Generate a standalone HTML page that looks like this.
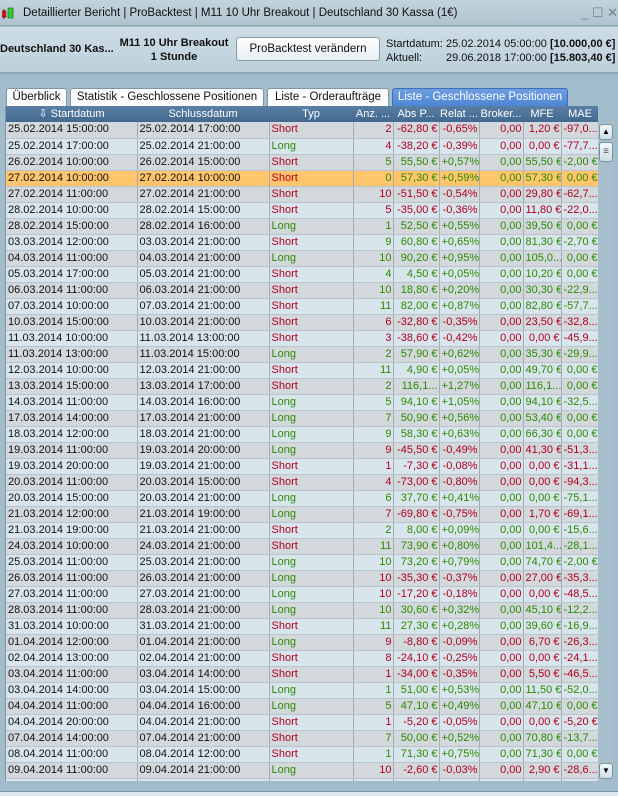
<!DOCTYPE html><html><head><meta charset="utf-8"><style>
*{margin:0;padding:0;box-sizing:border-box}
body{width:618px;height:796px;overflow:hidden;background:#a3bccb;font-family:"Liberation Sans",Arial,sans-serif;position:relative}
#tb{position:absolute;left:0;top:0;width:618px;height:26px;background:linear-gradient(#c3d3dc,#afc4cf);font-size:11.5px;color:#111;line-height:26px;padding-left:23px;border-bottom:1px solid #8fa6b3;white-space:nowrap}
#ico{position:absolute;left:2px;top:7px;width:12px;height:13px}
#wc{position:absolute;right:0;top:0;color:#6d8593;font-size:13px}
#hp{position:absolute;left:0;top:27px;width:618px;height:47px;background:linear-gradient(#cddde6,#bdd0da);border-bottom:2px solid #8ea6b3;font-size:11.5px;color:#111;white-space:nowrap}
.b{font-weight:bold}
#btn{position:absolute;left:236px;top:10px;width:144px;height:24px;border:1px solid #8a9aa4;border-radius:3px;background:linear-gradient(#fff,#e8eef1);text-align:center;line-height:22px;font-size:11.5px}
#tabs{position:absolute;top:88px;left:6px;height:18px;font-size:11.5px;white-space:nowrap}
.tab{position:absolute;top:0;height:18px;border:1px solid #7f95a2;border-bottom:none;background:#fbfcfd;border-radius:3px 3px 0 0;text-align:center;line-height:17px;color:#111}
#grid{position:absolute;left:5px;top:106px;width:593px;height:675px;background:#d6e2ea;overflow:hidden;border-left:1px solid #8096a4}
table{border-collapse:collapse;table-layout:fixed;width:593px;font-size:11px}
th{background:linear-gradient(#5a7fa4,#42688f);color:#fff;font-weight:normal;height:16px;line-height:15px;text-align:center;white-space:nowrap;overflow:hidden;font-size:11px;padding:0}
td{height:16px;border-right:1px solid #a3adb5;border-bottom:1px solid #b8c3ca;white-space:nowrap;overflow:hidden;padding:0 1px 0 2px;line-height:15px}
tr:nth-child(odd) td{background:#d9e5ed}
tr:nth-child(even) td{background:#d3d8dd}
tr.hl td{background:#ffc56c}
td.n{text-align:right}
.r td{color:#b0001c}.g td{color:#2c8a00}
.r td.d,.g td.d{color:#111}
td.S{color:#b0001c!important}td.L{color:#2c8a00!important}
#sb{position:absolute;left:598px;top:122px;width:16px;height:659px;background:#a7bfcd}
.sbb{position:absolute;left:1px;width:14px;height:16px;border:1px solid #7a93a1;border-radius:3px;background:linear-gradient(#f4f8fa,#cfdde5);font-size:8px;text-align:center;line-height:14px}
#bot{position:absolute;left:0;top:791px;width:618px;height:5px;background:#dfe8ee;border-top:1px solid #7f97a4}
</style></head><body>
<div id="tb"><svg id="ico" viewBox="0 0 12 13"><rect x="0" y="4" width="4" height="6" fill="#e33" stroke="#700" stroke-width=".6"/><line x1="2" y1="2" x2="2" y2="12" stroke="#700"/><rect x="6" y="1" width="5" height="10" fill="#3c3" stroke="#060" stroke-width=".6"/></svg>Detaillierter Bericht | ProBacktest | M11 10 Uhr Breakout | Deutschland 30 Kassa (1€)<span id="wc">_ ☐ ✕</span></div>
<div id="hp">
<div class="b" style="position:absolute;left:0;top:16px;font-size:11px">Deutschland 30 Kas...</div>
<div class="b" style="position:absolute;left:114px;top:9px;width:120px;text-align:center;line-height:14px;font-size:11px">M11 10 Uhr Breakout<br>1 Stunde</div>
<div id="btn">ProBacktest verändern</div>
<div style="position:absolute;left:386px;top:10px;line-height:14px;font-size:11px">Startdatum:<br>Aktuell:</div>
<div style="position:absolute;left:446px;top:10px;line-height:14px;font-size:11px">25.02.2014 05:00:00 <b>[10.000,00 €]</b><br>29.06.2018 17:00:00 <b>[15.803,40 €]</b></div>
</div>
<div id="tabs">
<div class="tab" style="left:0;width:61px">Überblick</div>
<div class="tab" style="left:64px;width:194px">Statistik - Geschlossene Positionen</div>
<div class="tab" style="left:261px;width:122px">Liste - Orderaufträge</div>
<div class="tab" style="left:386px;width:176px;background:linear-gradient(#6f9ee0,#4d86d6);color:#fff;border-color:#3c6fb8">Liste - Geschlossene Positionen</div>
</div>
<div id="grid"><table>
<colgroup><col style="width:131px"><col style="width:132px"><col style="width:84px"><col style="width:40px"><col style="width:46px"><col style="width:40px"><col style="width:44px"><col style="width:38px"><col style="width:38px"></colgroup>
<tr><th>⇩ Startdatum</th><th>Schlussdatum</th><th>Typ</th><th>Anz. ...</th><th>Abs P...</th><th>Relat ...</th><th>Broker...</th><th>MFE</th><th>MAE</th></tr>
<tr class="r"><td class="d">25.02.2014 15:00:00</td><td class="d">25.02.2014 17:00:00</td><td class="S">Short</td><td class="n">2</td><td class="n">-62,80 €</td><td class="n">-0,65%</td><td class="n">0,00</td><td class="n">1,20 €</td><td>-97,0...</td></tr>
<tr class="r"><td class="d">25.02.2014 17:00:00</td><td class="d">25.02.2014 21:00:00</td><td class="L">Long</td><td class="n">4</td><td class="n">-38,20 €</td><td class="n">-0,39%</td><td class="n">0,00</td><td class="n">0,00 €</td><td>-77,7...</td></tr>
<tr class="g"><td class="d">26.02.2014 10:00:00</td><td class="d">26.02.2014 15:00:00</td><td class="S">Short</td><td class="n">5</td><td class="n">55,50 €</td><td class="n">+0,57%</td><td class="n">0,00</td><td class="n">55,50 €</td><td>-2,00 €</td></tr>
<tr class="g hl"><td class="d">27.02.2014 10:00:00</td><td class="d">27.02.2014 10:00:00</td><td class="S">Short</td><td class="n">0</td><td class="n">57,30 €</td><td class="n">+0,59%</td><td class="n">0,00</td><td class="n">57,30 €</td><td class="n">0,00 €</td></tr>
<tr class="r"><td class="d">27.02.2014 11:00:00</td><td class="d">27.02.2014 21:00:00</td><td class="S">Short</td><td class="n">10</td><td class="n">-51,50 €</td><td class="n">-0,54%</td><td class="n">0,00</td><td class="n">29,80 €</td><td>-62,7...</td></tr>
<tr class="r"><td class="d">28.02.2014 10:00:00</td><td class="d">28.02.2014 15:00:00</td><td class="S">Short</td><td class="n">5</td><td class="n">-35,00 €</td><td class="n">-0,36%</td><td class="n">0,00</td><td class="n">11,80 €</td><td>-22,0...</td></tr>
<tr class="g"><td class="d">28.02.2014 15:00:00</td><td class="d">28.02.2014 16:00:00</td><td class="L">Long</td><td class="n">1</td><td class="n">52,50 €</td><td class="n">+0,55%</td><td class="n">0,00</td><td class="n">39,50 €</td><td class="n">0,00 €</td></tr>
<tr class="g"><td class="d">03.03.2014 12:00:00</td><td class="d">03.03.2014 21:00:00</td><td class="S">Short</td><td class="n">9</td><td class="n">60,80 €</td><td class="n">+0,65%</td><td class="n">0,00</td><td class="n">81,30 €</td><td>-2,70 €</td></tr>
<tr class="g"><td class="d">04.03.2014 11:00:00</td><td class="d">04.03.2014 21:00:00</td><td class="L">Long</td><td class="n">10</td><td class="n">90,20 €</td><td class="n">+0,95%</td><td class="n">0,00</td><td>105,0...</td><td class="n">0,00 €</td></tr>
<tr class="g"><td class="d">05.03.2014 17:00:00</td><td class="d">05.03.2014 21:00:00</td><td class="S">Short</td><td class="n">4</td><td class="n">4,50 €</td><td class="n">+0,05%</td><td class="n">0,00</td><td class="n">10,20 €</td><td class="n">0,00 €</td></tr>
<tr class="g"><td class="d">06.03.2014 11:00:00</td><td class="d">06.03.2014 21:00:00</td><td class="S">Short</td><td class="n">10</td><td class="n">18,80 €</td><td class="n">+0,20%</td><td class="n">0,00</td><td class="n">30,30 €</td><td>-22,9...</td></tr>
<tr class="g"><td class="d">07.03.2014 10:00:00</td><td class="d">07.03.2014 21:00:00</td><td class="S">Short</td><td class="n">11</td><td class="n">82,00 €</td><td class="n">+0,87%</td><td class="n">0,00</td><td class="n">82,80 €</td><td>-57,7...</td></tr>
<tr class="r"><td class="d">10.03.2014 15:00:00</td><td class="d">10.03.2014 21:00:00</td><td class="S">Short</td><td class="n">6</td><td class="n">-32,80 €</td><td class="n">-0,35%</td><td class="n">0,00</td><td class="n">23,50 €</td><td>-32,8...</td></tr>
<tr class="r"><td class="d">11.03.2014 10:00:00</td><td class="d">11.03.2014 13:00:00</td><td class="S">Short</td><td class="n">3</td><td class="n">-38,60 €</td><td class="n">-0,42%</td><td class="n">0,00</td><td class="n">0,00 €</td><td>-45,9...</td></tr>
<tr class="g"><td class="d">11.03.2014 13:00:00</td><td class="d">11.03.2014 15:00:00</td><td class="L">Long</td><td class="n">2</td><td class="n">57,90 €</td><td class="n">+0,62%</td><td class="n">0,00</td><td class="n">35,30 €</td><td>-29,9...</td></tr>
<tr class="g"><td class="d">12.03.2014 10:00:00</td><td class="d">12.03.2014 21:00:00</td><td class="S">Short</td><td class="n">11</td><td class="n">4,90 €</td><td class="n">+0,05%</td><td class="n">0,00</td><td class="n">49,70 €</td><td class="n">0,00 €</td></tr>
<tr class="g"><td class="d">13.03.2014 15:00:00</td><td class="d">13.03.2014 17:00:00</td><td class="S">Short</td><td class="n">2</td><td class="n">116,1...</td><td class="n">+1,27%</td><td class="n">0,00</td><td>116,1...</td><td class="n">0,00 €</td></tr>
<tr class="g"><td class="d">14.03.2014 11:00:00</td><td class="d">14.03.2014 16:00:00</td><td class="L">Long</td><td class="n">5</td><td class="n">94,10 €</td><td class="n">+1,05%</td><td class="n">0,00</td><td class="n">94,10 €</td><td>-32,5...</td></tr>
<tr class="g"><td class="d">17.03.2014 14:00:00</td><td class="d">17.03.2014 21:00:00</td><td class="L">Long</td><td class="n">7</td><td class="n">50,90 €</td><td class="n">+0,56%</td><td class="n">0,00</td><td class="n">53,40 €</td><td class="n">0,00 €</td></tr>
<tr class="g"><td class="d">18.03.2014 12:00:00</td><td class="d">18.03.2014 21:00:00</td><td class="L">Long</td><td class="n">9</td><td class="n">58,30 €</td><td class="n">+0,63%</td><td class="n">0,00</td><td class="n">66,30 €</td><td class="n">0,00 €</td></tr>
<tr class="r"><td class="d">19.03.2014 11:00:00</td><td class="d">19.03.2014 20:00:00</td><td class="L">Long</td><td class="n">9</td><td class="n">-45,50 €</td><td class="n">-0,49%</td><td class="n">0,00</td><td class="n">41,30 €</td><td>-51,3...</td></tr>
<tr class="r"><td class="d">19.03.2014 20:00:00</td><td class="d">19.03.2014 21:00:00</td><td class="S">Short</td><td class="n">1</td><td class="n">-7,30 €</td><td class="n">-0,08%</td><td class="n">0,00</td><td class="n">0,00 €</td><td>-31,1...</td></tr>
<tr class="r"><td class="d">20.03.2014 11:00:00</td><td class="d">20.03.2014 15:00:00</td><td class="S">Short</td><td class="n">4</td><td class="n">-73,00 €</td><td class="n">-0,80%</td><td class="n">0,00</td><td class="n">0,00 €</td><td>-94,3...</td></tr>
<tr class="g"><td class="d">20.03.2014 15:00:00</td><td class="d">20.03.2014 21:00:00</td><td class="L">Long</td><td class="n">6</td><td class="n">37,70 €</td><td class="n">+0,41%</td><td class="n">0,00</td><td class="n">0,00 €</td><td>-75,1...</td></tr>
<tr class="r"><td class="d">21.03.2014 12:00:00</td><td class="d">21.03.2014 19:00:00</td><td class="L">Long</td><td class="n">7</td><td class="n">-69,80 €</td><td class="n">-0,75%</td><td class="n">0,00</td><td class="n">1,70 €</td><td>-69,1...</td></tr>
<tr class="g"><td class="d">21.03.2014 19:00:00</td><td class="d">21.03.2014 21:00:00</td><td class="S">Short</td><td class="n">2</td><td class="n">8,00 €</td><td class="n">+0,09%</td><td class="n">0,00</td><td class="n">0,00 €</td><td>-15,6...</td></tr>
<tr class="g"><td class="d">24.03.2014 10:00:00</td><td class="d">24.03.2014 21:00:00</td><td class="S">Short</td><td class="n">11</td><td class="n">73,90 €</td><td class="n">+0,80%</td><td class="n">0,00</td><td>101,4...</td><td>-28,1...</td></tr>
<tr class="g"><td class="d">25.03.2014 11:00:00</td><td class="d">25.03.2014 21:00:00</td><td class="L">Long</td><td class="n">10</td><td class="n">73,20 €</td><td class="n">+0,79%</td><td class="n">0,00</td><td class="n">74,70 €</td><td>-2,00 €</td></tr>
<tr class="r"><td class="d">26.03.2014 11:00:00</td><td class="d">26.03.2014 21:00:00</td><td class="L">Long</td><td class="n">10</td><td class="n">-35,30 €</td><td class="n">-0,37%</td><td class="n">0,00</td><td class="n">27,00 €</td><td>-35,3...</td></tr>
<tr class="r"><td class="d">27.03.2014 11:00:00</td><td class="d">27.03.2014 21:00:00</td><td class="L">Long</td><td class="n">10</td><td class="n">-17,20 €</td><td class="n">-0,18%</td><td class="n">0,00</td><td class="n">0,00 €</td><td>-48,5...</td></tr>
<tr class="g"><td class="d">28.03.2014 11:00:00</td><td class="d">28.03.2014 21:00:00</td><td class="L">Long</td><td class="n">10</td><td class="n">30,60 €</td><td class="n">+0,32%</td><td class="n">0,00</td><td class="n">45,10 €</td><td>-12,2...</td></tr>
<tr class="g"><td class="d">31.03.2014 10:00:00</td><td class="d">31.03.2014 21:00:00</td><td class="S">Short</td><td class="n">11</td><td class="n">27,30 €</td><td class="n">+0,28%</td><td class="n">0,00</td><td class="n">39,60 €</td><td>-16,9...</td></tr>
<tr class="r"><td class="d">01.04.2014 12:00:00</td><td class="d">01.04.2014 21:00:00</td><td class="L">Long</td><td class="n">9</td><td class="n">-8,80 €</td><td class="n">-0,09%</td><td class="n">0,00</td><td class="n">6,70 €</td><td>-26,3...</td></tr>
<tr class="r"><td class="d">02.04.2014 13:00:00</td><td class="d">02.04.2014 21:00:00</td><td class="S">Short</td><td class="n">8</td><td class="n">-24,10 €</td><td class="n">-0,25%</td><td class="n">0,00</td><td class="n">0,00 €</td><td>-24,1...</td></tr>
<tr class="r"><td class="d">03.04.2014 11:00:00</td><td class="d">03.04.2014 14:00:00</td><td class="S">Short</td><td class="n">1</td><td class="n">-34,00 €</td><td class="n">-0,35%</td><td class="n">0,00</td><td class="n">5,50 €</td><td>-46,5...</td></tr>
<tr class="g"><td class="d">03.04.2014 14:00:00</td><td class="d">03.04.2014 15:00:00</td><td class="L">Long</td><td class="n">1</td><td class="n">51,00 €</td><td class="n">+0,53%</td><td class="n">0,00</td><td class="n">11,50 €</td><td>-52,0...</td></tr>
<tr class="g"><td class="d">04.04.2014 11:00:00</td><td class="d">04.04.2014 16:00:00</td><td class="L">Long</td><td class="n">5</td><td class="n">47,10 €</td><td class="n">+0,49%</td><td class="n">0,00</td><td class="n">47,10 €</td><td class="n">0,00 €</td></tr>
<tr class="r"><td class="d">04.04.2014 20:00:00</td><td class="d">04.04.2014 21:00:00</td><td class="S">Short</td><td class="n">1</td><td class="n">-5,20 €</td><td class="n">-0,05%</td><td class="n">0,00</td><td class="n">0,00 €</td><td>-5,20 €</td></tr>
<tr class="g"><td class="d">07.04.2014 14:00:00</td><td class="d">07.04.2014 21:00:00</td><td class="S">Short</td><td class="n">7</td><td class="n">50,00 €</td><td class="n">+0,52%</td><td class="n">0,00</td><td class="n">70,80 €</td><td>-13,7...</td></tr>
<tr class="g"><td class="d">08.04.2014 11:00:00</td><td class="d">08.04.2014 12:00:00</td><td class="S">Short</td><td class="n">1</td><td class="n">71,30 €</td><td class="n">+0,75%</td><td class="n">0,00</td><td class="n">71,30 €</td><td class="n">0,00 €</td></tr>
<tr class="r"><td class="d">09.04.2014 11:00:00</td><td class="d">09.04.2014 21:00:00</td><td class="L">Long</td><td class="n">10</td><td class="n">-2,60 €</td><td class="n">-0,03%</td><td class="n">0,00</td><td class="n">2,90 €</td><td>-28,6...</td></tr>
<tr><td></td><td></td><td></td><td></td><td></td><td></td><td></td><td></td><td></td></tr>
</table></div>
<div id="sb"><div class="sbb" style="top:2px">▲</div><div class="sbb" style="top:20px;height:20px;line-height:18px;font-size:10px;color:#556">≡</div><div class="sbb" style="top:641px">▼</div></div>
<div id="bot"></div>
</body></html>
